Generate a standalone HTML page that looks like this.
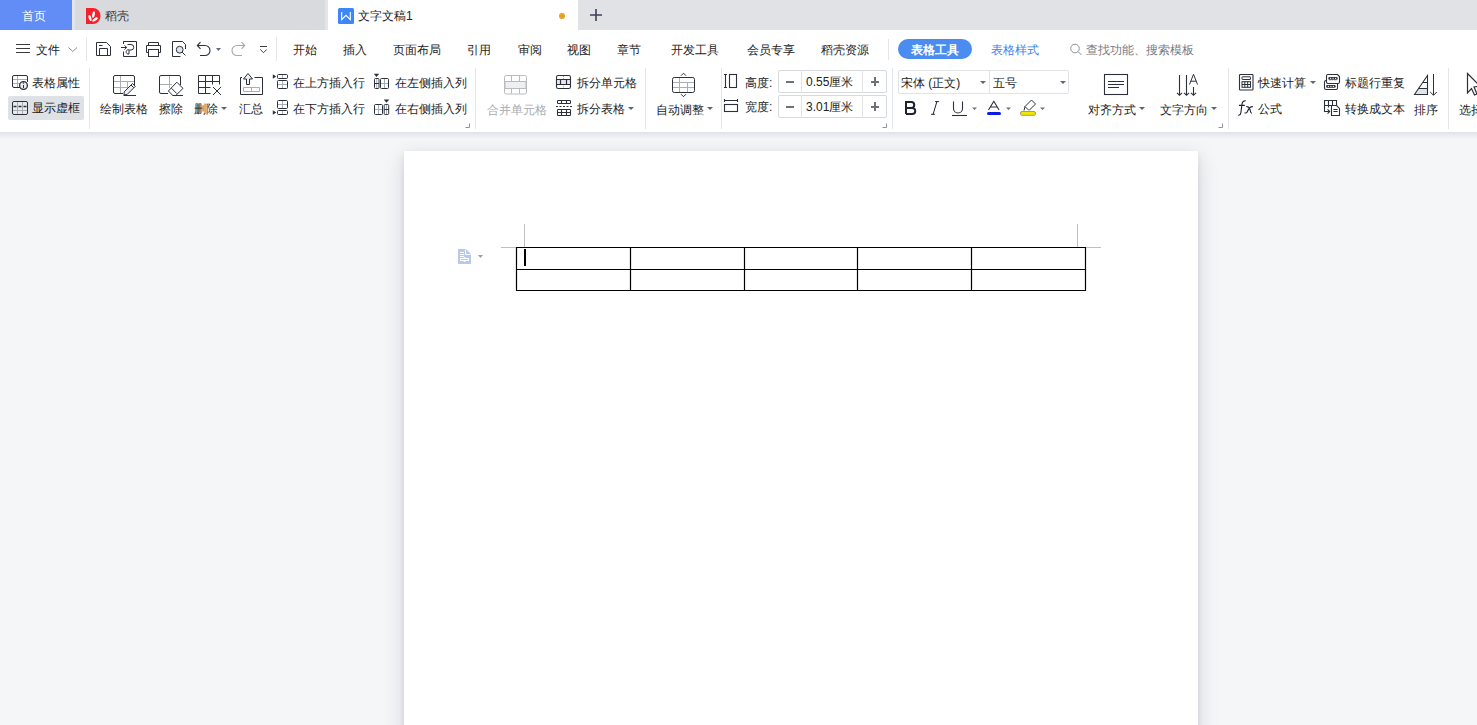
<!DOCTYPE html>
<html><head><meta charset="utf-8">
<style>
*{box-sizing:border-box}
html,body{margin:0;padding:0;width:1477px;height:725px;overflow:hidden;background:#f5f6f8;font-family:"Liberation Sans",sans-serif;color:#222}
.a{position:absolute}
.t{position:absolute;font-size:12px;line-height:12px;white-space:nowrap}
svg{position:absolute;overflow:visible;z-index:2}
.sep{position:absolute;width:1px;background:#e3e5e9}
.dd{position:absolute;width:0;height:0;border-left:3px solid transparent;border-right:3px solid transparent;border-top:3px solid #5d6577}
</style></head><body>
<!-- TAB BAR -->
<div class="a" style="left:0;top:0;width:1477px;height:30px;background:#e1e2e6"></div>
<div class="a" style="left:0;top:0;width:72px;height:30px;background:#628df6"></div>
<div class="a" style="left:72px;top:0;width:3px;height:30px;background:#e4e5e8"></div>
<div class="a" style="left:75px;top:0;width:250px;height:30px;background:#d9dadd"></div>
<div class="a" style="left:325px;top:0;width:3px;height:30px;background:#e4e5e8"></div>
<div class="a" style="left:328px;top:0;width:250px;height:30px;background:#fff"></div>
<div class="t" style="left:22px;top:10px;color:#fff">首页</div>
<div class="t" style="left:105px;top:10px;color:#333">稻壳</div>
<div class="t" style="left:358px;top:10px;color:#222">文字文稿1</div>
<div class="a" style="left:559px;top:13px;width:6px;height:6px;border-radius:50%;background:#e8a020"></div>
<!-- RIBBON AREA -->
<div class="a" style="left:0;top:30px;width:1477px;height:102px;background:#fff"></div>
<div class="a" style="left:0;top:132px;width:1477px;height:7px;background:linear-gradient(#e1e3e7,#f5f6f8)"></div>

<!-- PAGE -->
<div class="a" style="left:404px;top:151px;width:794px;height:600px;background:#fff;box-shadow:0 3px 6px rgba(20,30,50,0.08),0 6px 20px rgba(20,30,50,0.15)"></div>

<div id="main"></div>
<svg width="1477" height="135" style="left:0;top:0" viewBox="0 0 1477 135">
<g fill="none" stroke="#2b303b" stroke-width="1">
<!-- underline U -->
<path d="M953.5 101.5 V108.5 A4.5 4.5 0 0 0 962.5 108.5 V101.5" stroke-width="1.1"/>
<path d="M952 115.5 H967" stroke-width="1.1"/>
<path d="M972 107.5 H977 L974.5 110 Z" fill="#6c7079" stroke="none"/>
<!-- A font color -->
<path d="M988.5 110 L993.8 101.2 L999.1 110 M990.4 107 H997.2" stroke-width="1.1"/>
<rect x="987" y="112" width="14" height="3" rx="1.5" fill="#0a1ee6" stroke="none"/>
<path d="M1006 107.5 H1011 L1008.5 110 Z" fill="#6c7079" stroke="none"/>
<!-- highlighter -->
<path d="M1024 110.5 L1025 106.5 L1031.5 100 L1035.5 104 L1029 110.5" stroke-width="1"/>
<path d="M1025 106.5 L1028.5 110"/>
<rect x="1020.5" y="111.5" width="15" height="3.8" rx="1.5" fill="#f4e600" stroke="#8a8a60" stroke-width="0.8"/>
<path d="M1040 107.5 H1045 L1042.5 110 Z" fill="#6c7079" stroke="none"/>
<!-- duiqi fangshi -->
<rect x="1104.5" y="74.5" width="23" height="20" stroke-width="1.1"/>
<path d="M1108 81.5 H1124 M1108 84.5 H1124 M1108 87.5 H1119" stroke-width="1.1"/>
<!-- wenzi fangxiang -->
<path d="M1179.5 75 V95 M1177 92.8 L1179.5 95.3 L1182 92.8" stroke-width="1.1"/>
<path d="M1186.5 75 V95 M1184 92.8 L1186.5 95.3 L1189 92.8" stroke-width="1.1"/>
<path d="M1193.5 87 V95 M1191 92.8 L1193.5 95.3 L1196 92.8" stroke-width="1.1"/>
<path d="M1189.5 84.5 L1193.5 74.3 L1197.5 84.5 M1190.8 81.2 H1196.2" stroke-width="1"/>
<!-- calculator -->
<rect x="1239.5" y="74.5" width="13.5" height="15.5" rx="0.8" stroke-width="1.1"/>
<rect x="1242" y="76.8" width="8.5" height="2.7" rx="0.5"/>
<rect x="1242" y="81.7" width="8.5" height="5.6"/>
<path d="M1242 84.5 H1250.5 M1244.8 81.7 V87.3 M1247.7 81.7 V87.3"/>
<!-- biaoti hang chongfu -->
<rect x="1324.5" y="80.5" width="13" height="9" rx="1.5" stroke-width="1.1"/>
<rect x="1326.1" y="85" width="9.6" height="2.8" rx="1.2" fill="#2b303b" stroke="none"/>
<path d="M1327.8 86.4 H1329 M1330.3 86.4 H1331.5 M1332.8 86.4 H1334" stroke="#fff" stroke-width="1"/>
<path d="M1326.5 82 V76 A1.5 1.5 0 0 1 1328 74.5 H1337.5 L1339.5 76.5 V82 A1.5 1.5 0 0 1 1338 83.5 H1328 A1.5 1.5 0 0 1 1326.5 82 Z" fill="#fff" stroke-width="1.1"/>
<rect x="1328.3" y="77" width="9.4" height="2.7" rx="1.2" fill="#2b303b" stroke="none"/>
<path d="M1330 78.35 H1331.2 M1332.5 78.35 H1333.7 M1335 78.35 H1336.2" stroke="#fff" stroke-width="1"/>
<path d="M1329 80.6 H1337" stroke="#c5c8cd" stroke-width="1" stroke-dasharray="1.6 0.9"/>
<!-- zhuanhuan wenben -->
<path d="M1331 105.5 H1324.5 V100.5 H1336.5 V105.5 M1328.5 100.5 V107.5 M1332.5 100.5 V105.5" stroke-width="1.1"/>
<path d="M1324.5 105.5 V111.5 H1329.5 M1327.6 109.4 L1329.7 111.5 L1327.6 113.6" stroke-width="1.1"/>
<path d="M1331.5 105.5 H1336.6 L1339.5 108.4 V115.5 H1331.5 Z" stroke-width="1.1"/>
<path d="M1333.4 109.5 H1337.6 M1333.4 111.5 H1337.6" stroke-width="1.1"/>
<!-- paixu -->
<path d="M1414.5 94.5 L1418.6 88.5 H1427.5 V94.5 Z" fill="#e3e4e7" stroke="none"/>
<path d="M1414.5 94.5 L1427.5 75.5 V94.5 Z M1422.7 82.5 H1427.5 M1418.6 88.5 H1427.5" stroke-width="1.1"/>
<path d="M1433.5 74 V95 M1430.2 92 L1433.5 95.3 L1436.8 92" stroke-width="1"/>
<!-- select cursor -->
<path d="M1467.5 73.5 L1480 86 L1474 87 L1477 94 L1474.5 95 L1471.5 88.5 L1467.5 93 Z" stroke-width="1.2"/>
</g>
<g fill="none" stroke="#1e2330">
<path d="M906 114 V102 H911.3 A2.95 2.95 0 0 1 911.3 107.9 H906 M911.3 107.9 H912.2 A3.05 3.05 0 0 1 912.2 114 H906" stroke-width="2"/>
<path d="M936.9 101.6 L933.1 114.3 M935.1 101.6 H938.9 M931.1 114.3 H934.9" stroke-width="1"/>
<path d="M1245.8 100.8 C1243.5 100.5 1242.4 101.5 1242 104 L1240.9 112.5 C1240.6 114.5 1239.5 115.3 1238.2 115.2 M1239 105.4 H1244.8" stroke-width="1.1"/>
<path d="M1246.3 106.5 C1248.5 106.5 1249.5 107.5 1250 109.5 C1250.5 112 1251 113.4 1251.8 113.4 M1252.8 106.6 C1250 106.3 1248.5 109 1247.5 111.2 C1246.8 112.8 1245.8 113.6 1244.6 112.6" stroke-width="1.1"/>
</g>
</svg>
<svg width="1477" height="135" style="left:0;top:0" viewBox="0 0 1477 135">
<g fill="none" stroke="#2b303b" stroke-width="1">
<!-- biaoge shuxing -->
<path d="M17.5 76 V87.5 M12.5 79.5 H27.5 M12.5 83.5 H20" stroke="#a9adb4"/>
<path d="M20 87.5 H14 A1.5 1.5 0 0 1 12.5 86 V77 A1.5 1.5 0 0 1 14 75.5 H26 A1.5 1.5 0 0 1 27.5 77 V82"/>
<circle cx="23.5" cy="85.5" r="3.9" fill="#ececef" stroke-width="1.3"/>
<path d="M23.5 85 V88" stroke-width="1"/><circle cx="23.5" cy="83.1" r="0.75" fill="#2b303b" stroke="none"/>
<!-- xianshi xukuang -->
<rect x="12.5" y="101.5" width="15" height="13" rx="1.5" fill="#e9eaed"/>
<path d="M17.5 102 V114 M22.5 102 V114 M13 110.5 H27" stroke="#a9adb4"/>
<path d="M13.5 106.5 H16.5 M18.5 106.5 H21.5 M23.5 106.5 H26.5" stroke-width="1.3"/>
<!-- huizhi biaoge -->
<path d="M120.5 76 V93 M127.5 81.5 V88 M113.5 81.5 H134 M113.5 87.5 H130" stroke="#a9adb4"/>
<path d="M123 93.5 H115 A1.5 1.5 0 0 1 113.5 92 V77 A1.5 1.5 0 0 1 115 75.5 H133 A1.5 1.5 0 0 1 134.5 77 V85"/>
<path d="M124 94.8 L124.2 91.8 L132.5 83.5 L135.3 86.3 L127 94.6 Z" fill="#eceef1"/>
<path d="M131 85 L133.8 87.8"/>
<path d="M123.5 95.5 H136"/>
<!-- cachu -->
<path d="M169.5 76 V88 M159.5 84.5 H172" stroke="#a9adb4"/>
<path d="M168 93.5 H161 A1.5 1.5 0 0 1 159.5 92 V77 A1.5 1.5 0 0 1 161 75.5 H179 A1.5 1.5 0 0 1 180.5 77 V85"/>
<path d="M176.8 82.2 L183 88.4 L175.8 95.5 H172.8 L168.4 91 Z" fill="#fff"/>
<path d="M171.4 88.2 L176.8 93.6"/>
<path d="M172.5 95.5 H183"/>
<!-- shanchu -->
<path d="M198.5 75.5 H219.5 V84.5 M198.5 75.5 V93.5 H210.5 M198.5 81.5 H219.5 M198.5 87.5 H210.5 M205.5 75.5 V93.5 M212.5 75.5 V84.5"/>
<path d="M213 87 L221 95 M221 87 L213 95"/>
<!-- huizong -->
<path d="M242 77.5 H240.5 V94.5 H262.5 V77.5 H254.5"/>
<path d="M246.5 84.5 V79 H243.5 L248 73.5 L252.5 79 H249.5 V84.5 Z" fill="#f0f1f3"/>
<path d="M243.5 87.5 H259.5 V91.5 H243.5 Z M251.5 87.5 V91.5" stroke="#a9adb4"/>
<!-- insert above -->
<path d="M272.8 74.2 L276.3 76.5 L272.8 78.8 Z" fill="#2b303b" stroke="none"/>
<rect x="277.5" y="74.5" width="10" height="4" rx="1"/>
<path d="M282.5 75 V78 M282.5 81 V88 M278 84.5 H287" stroke="#a9adb4"/>
<rect x="277.5" y="80.5" width="10" height="8" rx="1"/>
<!-- insert below -->
<path d="M282.5 101 V108 M278 104.5 H287" stroke="#a9adb4"/>
<rect x="277.5" y="100.5" width="10" height="8" rx="1"/>
<path d="M282.5 111 V114" stroke="#a9adb4"/>
<rect x="277.5" y="110.5" width="10" height="4" rx="1"/>
<path d="M272.8 110.2 L276.3 112.5 L272.8 114.8 Z" fill="#2b303b" stroke="none"/>
<!-- insert left col -->
<path d="M373.8 73.8 H379.2 L376.5 77 Z" fill="#2b303b" stroke="none"/>
<path d="M376.7 79 V88 M384.5 79 V88 M380.5 83.5 H388.5" stroke="#a9adb4"/>
<rect x="374.5" y="78.5" width="4.5" height="10" rx="1"/>
<path d="M374.5 83.5 H379"/>
<rect x="380.5" y="78.5" width="8" height="10" rx="1"/>
<!-- insert right col -->
<path d="M378.5 105 V114 M374.5 109.5 H382.5 M386.5 105 V114" stroke="#a9adb4"/>
<rect x="374.5" y="104.5" width="8" height="10" rx="1"/>
<rect x="384.2" y="104.5" width="4.5" height="10" rx="1"/>
<path d="M384.2 109.5 H388.7"/>
<path d="M383.8 99.6 H389.2 L386.5 102.8 Z" fill="#2b303b" stroke="none"/>
<!-- hebing (gray) -->
<g stroke="#b9bbbf">
<rect x="504.5" y="75.5" width="22" height="18.5" rx="1.8"/>
<rect x="505" y="81.5" width="21" height="7" fill="#efefef"/>
<path d="M511.5 76 V81 M519.5 76 V81 M511.5 88.5 V93.5 M519.5 88.5 V93.5"/>
</g>
<!-- chaifen danyuange -->
<rect x="557" y="80" width="13" height="4" fill="#e8e9ec" stroke="none"/>
<path d="M563.5 76 V79.5 M563.5 84.5 V88" stroke="#a9adb4" stroke-dasharray="1 1"/>
<rect x="556.5" y="75.5" width="14" height="13" rx="1.8" stroke-width="1.1"/>
<path d="M557 79.5 H570 M557 84.5 H570 M560.5 79.5 V84.5 M566.5 79.5 V84.5" stroke-width="1.2"/>
<!-- chaifen biaoge -->
<rect x="557.5" y="100.5" width="13" height="3" rx="0.8" stroke-width="1.1"/>
<path d="M561.5 100.5 V103.5 M566.5 100.5 V103.5" stroke-width="1.1"/>
<path d="M556 106.5 H572" stroke-dasharray="2 1.5" stroke-width="1.1"/>
<rect x="557.5" y="109.5" width="13" height="6" rx="0.8" stroke-width="1.1"/>
<path d="M557.5 112.5 H570.5 M561.5 109.5 V115.5 M566.5 109.5 V115.5" stroke-width="1.1"/>
<!-- zidong tiaozheng -->
<path d="M679.5 78 V92 M687.5 82.5 V92 M673 82.5 H694 M673 87.5 H694" stroke="#a9adb4"/>
<rect x="672.5" y="77.5" width="22" height="15" rx="1.8"/>
<path d="M681 75.7 L683.5 73.2 L686 75.7 M681 94.2 L683.5 96.7 L686 94.2"/>
<!-- gaodu icon -->
<path d="M725.5 74.5 V87.5 M724 74.5 H727 M724 87.5 H727" stroke-width="1.1"/>
<rect x="729.5" y="74.5" width="7" height="13" stroke-width="1.1"/>
<!-- kuandu icon -->
<path d="M724.5 100.5 H737.5 M724.5 99 V102 M737.5 99 V102" stroke-width="1.1"/>
<rect x="724.5" y="104.5" width="13" height="7" stroke-width="1.1"/>
<!-- corner marks -->
<path d="M465.5 127.5 H469.5 V123.5 M882.5 127.5 H886.5 V123.5 M1218.5 127.5 H1222.5 V123.5" stroke="#8c93a3"/>
</g>
</svg>
<svg width="1477" height="135" style="left:0;top:0" viewBox="0 0 1477 135">
<g fill="none" stroke="#2b303b" stroke-width="1">
<!-- tab: daoke red D -->
<path d="M86 8 H93 A7.5 8 0 0 1 93 24 H86 Z" fill="#f5222d" stroke="none"/>
<ellipse cx="90" cy="18" rx="1.3" ry="3.2" fill="#fff" stroke="none" transform="rotate(-15 90 18)"/>
<ellipse cx="93.5" cy="14.5" rx="1.3" ry="3.3" fill="#fff" stroke="none" transform="rotate(10 93.5 14.5)"/>
<ellipse cx="95" cy="19.5" rx="1.3" ry="3.2" fill="#fff" stroke="none" transform="rotate(55 95 19.5)"/>
<!-- W icon -->
<rect x="338" y="8" width="16" height="16" rx="1.5" fill="#3d86f5" stroke="none"/>
<path d="M341.7 12 V19.7 L346 15.3 L350.3 19.7 V12" stroke="#fff" stroke-width="1.1"/>
<!-- plus -->
<path d="M590 15 H602 M596 9 V21" stroke="#3a4258" stroke-width="1.6"/>
<!-- hamburger -->
<path d="M16 44.5 H30 M16 48.5 H30 M16 52.5 H30" stroke="#3c3c3c"/>
<path d="M68.5 47.5 L72.8 51.5 L77 47.5" stroke="#8a8d93"/>
<!-- save -->
<path d="M96.5 42.5 H106.5 L110.5 46.5 V55.5 H96.5 Z"/>
<path d="M99.5 55.5 V48.5 H107.5 V55.5"/>
<path d="M99 45.5 H102.5"/>
<!-- import icon -->
<path d="M123.5 44 V41.5 H136.5 V56.5 H123.5 V51.5"/>
<path d="M121 47.5 H126.5 M124.5 45.5 L126.8 47.5 L124.5 49.5"/>
<path d="M127.5 44.5 H131 A2.6 2.6 0 0 1 131 50 H129.5 A2.2 2.2 0 1 0 129 54 V50" />
<!-- print -->
<path d="M148.5 45 V42.5 H158.5 V45"/>
<path d="M148.5 52.5 H146.5 V45.5 H160.5 V52.5 H158.5"/>
<rect x="148.5" y="49.5" width="10" height="7"/>
<!-- preview -->
<path d="M180.5 56.5 H172.5 V41.5 H182.5 L185.5 44.5 V49"/>
<circle cx="179.7" cy="49.7" r="3.4" fill="#e3e4e7"/>
<path d="M182.2 52.2 L185.5 55.5"/>
<!-- undo -->
<path d="M197.5 45.5 H205 A5 5 0 0 1 205 55.5 H200" stroke-width="1.1"/>
<path d="M200.5 42.2 L197.3 45.5 L200.5 48.8" stroke-width="1.1"/>
<path d="M216 48 H221 L218.5 51 Z" fill="#5d6b88" stroke="none"/>
<!-- redo -->
<path d="M244.5 45.5 H237 A5 5 0 0 0 237 55.5 H242" stroke="#a8a8a8" stroke-width="1.1"/>
<path d="M241.5 42.2 L244.7 45.5 L241.5 48.8" stroke="#a8a8a8" stroke-width="1.1"/>
<!-- customize -->
<path d="M260 46.5 H267 M260.3 49.5 L263.5 52.7 L266.7 49.5" stroke="#3c3c3c"/>
<!-- search -->
<circle cx="1075" cy="48.5" r="4.3" stroke="#8c909a"/>
<path d="M1078.2 51.7 L1081.5 55" stroke="#8c909a"/>
</g>
</svg>
<div class="t" style="left:36px;top:44px;">文件</div>
<div class="t" style="left:293px;top:44px;">开始</div>
<div class="t" style="left:343px;top:44px;">插入</div>
<div class="t" style="left:393px;top:44px;">页面布局</div>
<div class="t" style="left:467px;top:44px;">引用</div>
<div class="t" style="left:518px;top:44px;">审阅</div>
<div class="t" style="left:567px;top:44px;">视图</div>
<div class="t" style="left:617px;top:44px;">章节</div>
<div class="t" style="left:671px;top:44px;">开发工具</div>
<div class="t" style="left:747px;top:44px;">会员专享</div>
<div class="t" style="left:821px;top:44px;">稻壳资源</div>
<div class="a" style="left:898px;top:39px;width:74px;height:20px;border-radius:10px;background:#4a8cf0"></div>
<div class="t" style="left:911px;top:44px;color:#fff;font-weight:bold">表格工具</div>
<div class="t" style="left:991px;top:44px;color:#3d82ee">表格样式</div>
<div class="t" style="left:1086px;top:44px;color:#767b85">查找功能<span style="margin-right:0px">、</span>搜索模板</div>
<div class="sep" style="left:86px;top:37px;height:24px"></div>
<div class="sep" style="left:276px;top:37px;height:24px"></div>
<div class="sep" style="left:888px;top:39px;height:21px"></div>
<div class="t" style="left:32px;top:77px;">表格属性</div>
<div class="a" style="left:8px;top:96px;width:76px;height:24px;background:#dee1e6;border-radius:2px"></div>
<div class="t" style="left:32px;top:102px;">显示虚框</div>
<div class="t" style="left:100px;top:103px;">绘制表格</div>
<div class="t" style="left:159px;top:103px;">擦除</div>
<div class="t" style="left:194px;top:103px;">删除</div>
<div class="t" style="left:239px;top:103px;">汇总</div>
<div class="t" style="left:293px;top:77px;">在上方插入行</div>
<div class="t" style="left:293px;top:103px;">在下方插入行</div>
<div class="t" style="left:395px;top:77px;">在左侧插入列</div>
<div class="t" style="left:395px;top:103px;">在右侧插入列</div>
<div class="t" style="left:487px;top:104px;color:#a9abb0">合并单元格</div>
<div class="t" style="left:577px;top:77px;">拆分单元格</div>
<div class="t" style="left:577px;top:103px;">拆分表格</div>
<div class="t" style="left:656px;top:104px;">自动调整</div>
<div class="t" style="left:745px;top:77px;">高度:</div>
<div class="t" style="left:745px;top:101px;">宽度:</div>
<div class="t" style="left:1088px;top:104px;">对齐方式</div>
<div class="t" style="left:1160px;top:104px;">文字方向</div>
<div class="t" style="left:1258px;top:77px;">快速计算</div>
<div class="t" style="left:1258px;top:103px;">公式</div>
<div class="t" style="left:1345px;top:77px;">标题行重复</div>
<div class="t" style="left:1345px;top:103px;">转换成文本</div>
<div class="t" style="left:1414px;top:104px;">排序</div>
<div class="t" style="left:1459px;top:104px;">选择</div>
<div class="sep" style="left:89px;top:68px;height:61px"></div>
<div class="sep" style="left:475px;top:68px;height:61px"></div>
<div class="sep" style="left:645px;top:68px;height:61px"></div>
<div class="sep" style="left:721px;top:68px;height:61px"></div>
<div class="sep" style="left:892px;top:68px;height:61px"></div>
<div class="sep" style="left:1228px;top:68px;height:61px"></div>
<div class="sep" style="left:1448px;top:68px;height:61px"></div>
<div class="dd" style="left:221px;top:107px"></div>
<div class="dd" style="left:628px;top:107px"></div>
<div class="dd" style="left:707px;top:107px"></div>
<div class="dd" style="left:1139px;top:107px"></div>
<div class="dd" style="left:1211px;top:107px"></div>
<div class="dd" style="left:1310px;top:81px"></div>
<div class="a" style="left:778px;top:70px;width:109px;height:23px;border:1px solid #d6d9de;border-radius:2px"></div>
<div class="a" style="left:801px;top:70px;width:1px;height:23px;background:#e1e3e7"></div>
<div class="a" style="left:862px;top:70px;width:1px;height:23px;background:#e1e3e7"></div>
<div class="a" style="left:786px;top:81px;width:8px;height:1.5px;background:#6e7178"></div>
<div class="a" style="left:871px;top:81px;width:8px;height:1.5px;background:#6e7178"></div>
<div class="a" style="left:874px;top:77px;width:1.5px;height:9px;background:#6e7178"></div>
<div class="t" style="left:806px;top:76px;">0.55厘米</div>
<div class="a" style="left:778px;top:95px;width:109px;height:23px;border:1px solid #d6d9de;border-radius:2px"></div>
<div class="a" style="left:801px;top:95px;width:1px;height:23px;background:#e1e3e7"></div>
<div class="a" style="left:862px;top:95px;width:1px;height:23px;background:#e1e3e7"></div>
<div class="a" style="left:786px;top:106px;width:8px;height:1.5px;background:#6e7178"></div>
<div class="a" style="left:871px;top:106px;width:8px;height:1.5px;background:#6e7178"></div>
<div class="a" style="left:874px;top:102px;width:1.5px;height:9px;background:#6e7178"></div>
<div class="t" style="left:806px;top:101px;">3.01厘米</div>
<div class="a" style="left:898px;top:70px;width:171px;height:24px;border:1px solid #e1e3e7;border-radius:2px"></div>
<div class="a" style="left:989px;top:70px;width:1px;height:24px;background:#e1e3e7"></div>
<div class="t" style="left:901px;top:77px;">宋体 (正文)</div>
<div class="t" style="left:993px;top:77px;">五号</div>
<div class="dd" style="left:980px;top:81px"></div>
<div class="dd" style="left:1060px;top:81px"></div>

<!-- DOC CONTENT -->
<svg width="1477" height="725" style="left:0;top:0" viewBox="0 0 1477 725">
<g fill="none" stroke="#000" stroke-width="1.2">
<path d="M516.5 247.5 H1085.5 V290.5 H516.5 Z M516.5 269.5 H1085.5 M630.5 247.5 V290.5 M744.5 247.5 V290.5 M857.5 247.5 V290.5 M971.5 247.5 V290.5"/>
</g>
<path d="M501 247.5 H516 M524.5 224 V247 M1077.5 224 V247 M1086 247.5 H1101" stroke="#c0c0c0" stroke-width="1"/>
<rect x="524" y="249" width="2" height="17" fill="#000"/>
<path d="M458 249 H466 L471 254 V264 H458 Z" fill="#b7cae9"/>
<path d="M465.5 249.5 V254.5 H470.5" fill="none" stroke="#fff" stroke-width="1"/>
<path d="M460 252.5 H464 M460 254.5 H464 M460 256.5 H464" stroke="#fff" stroke-width="1"/>
<rect x="460" y="258" width="9" height="3" fill="#fff"/>
<path d="M461 259.5 H468" stroke="#b7cae9" stroke-width="1"/>
<path d="M463.5 257 H465.5 L464.5 258.2 Z M463.5 262 H465.5 L464.5 260.8 Z" fill="#fff"/>
<path d="M478 255 H483 L480.5 258 Z" fill="#9a9ea6"/>
</svg>
</body></html>
